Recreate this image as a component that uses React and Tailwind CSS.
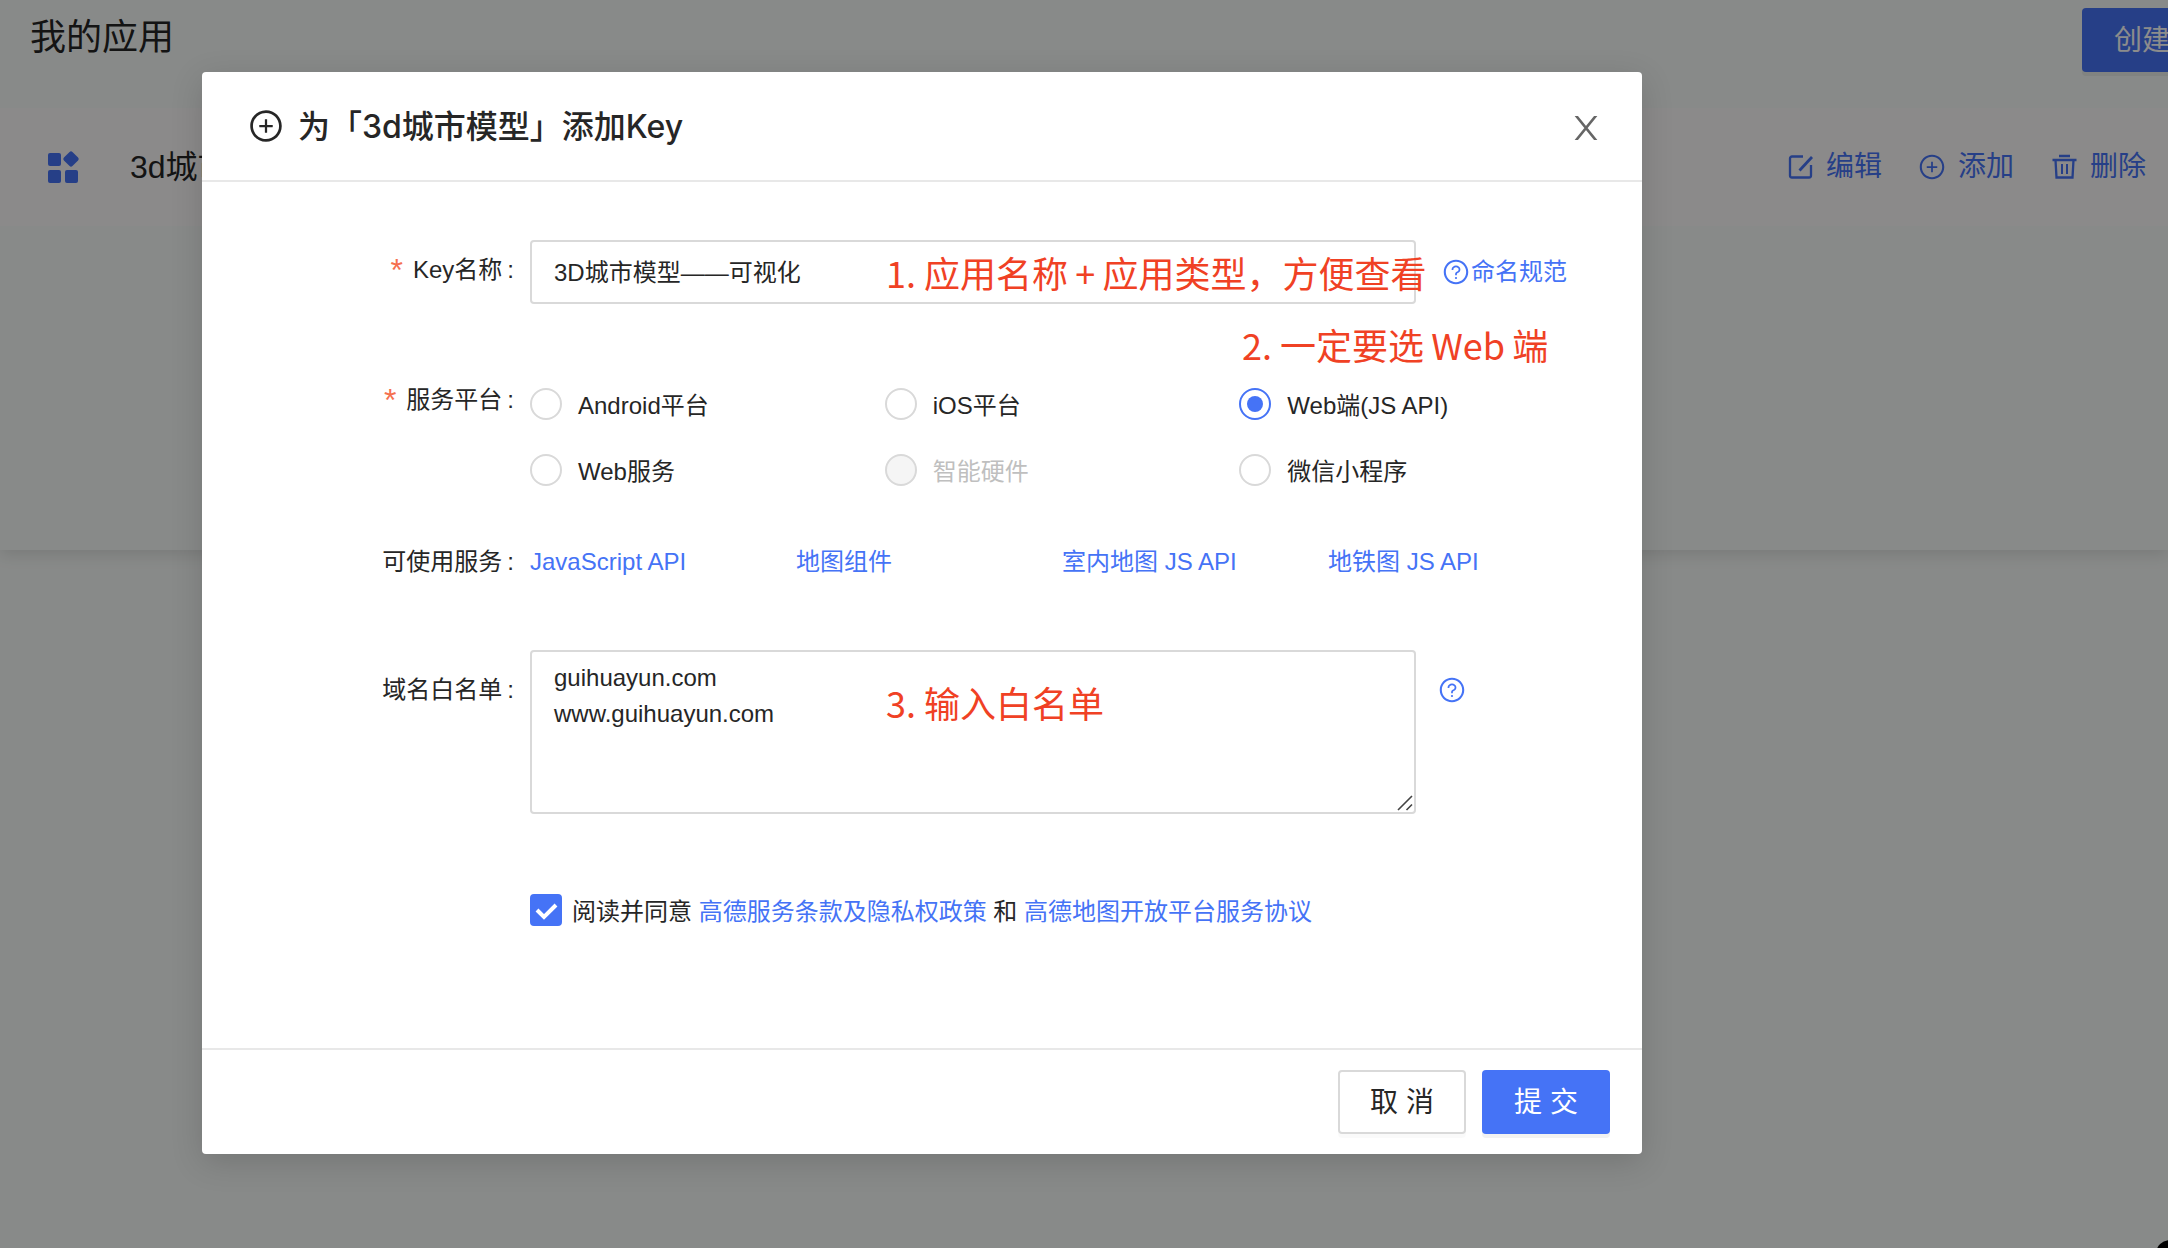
import React, { useState } from "react";
import { AiOutlinePlusCircle, AiOutlineQuestionCircle } from "react-icons/ai";

const platforms = [
  { id: "android", label: "Android平台" },
  { id: "ios", label: "iOS平台" },
  { id: "web-js", label: "Web端(JS API)" },
  { id: "web-service", label: "Web服务" },
  { id: "hardware", label: "智能硬件", disabled: true },
  { id: "wechat", label: "微信小程序" },
];

const services = ["JavaScript API", "地图组件", "室内地图 JS API", "地铁图 JS API"];

const AppsIcon = () => (
  <svg className="size-9 shrink-0" viewBox="0 0 36 36" fill="currentColor">
    <rect x="2" y="4" width="13" height="13" rx="2" />
    <rect x="2" y="21" width="13" height="13" rx="2" />
    <rect x="19" y="21" width="13" height="13" rx="2" />
    <rect x="19" y="4" width="12" height="12" rx="2" transform="rotate(45 25 10)" />
  </svg>
);

const EditIcon = () => (
  <svg className="size-7" viewBox="0 0 28 28" fill="none" stroke="currentColor" strokeWidth="2.3">
    <path d="M17 3.5H6a2 2 0 0 0-2 2v17a2 2 0 0 0 2 2h17a2 2 0 0 0 2-2V12" />
    <path d="M13.5 17.5 26 4" strokeWidth="2.8" />
  </svg>
);

const TrashIcon = () => (
  <svg className="size-7" viewBox="0 0 28 28" fill="none" stroke="currentColor" strokeWidth="2.3">
    <path d="M9 3h11M2.5 7h24M5.5 7l1 17.500h16l1-17.500" />
    <path d="M12 11v10M17 11v10" strokeWidth="2" />
  </svg>
);

const CloseIcon = () => (
  <svg className="size-6" viewBox="0 0 24 24" fill="none" stroke="currentColor" strokeWidth="2.6">
    <path d="M1.500-1 22.500 25M22.500-1 1.500 25" />
  </svg>
);

const RowAction = ({ icon, children }) => (
  <a href="#" className="flex items-center gap-3">
    {icon}
    {children}
  </a>
);

const FormRow = ({ label, htmlFor, required, className = "", labelClass, children }) => (
  <div className={`flex ${className}`}>
    <div className={`flex w-[328px] shrink-0 items-center justify-end pr-4 ${labelClass}`}>
      {required && <span className="mr-[10px] text-[32px] leading-6 text-[#f5704f]">*</span>}
      <label htmlFor={htmlFor}>{label}</label>
      <span className="ml-[5px]">:</span>
    </div>
    <div className="min-w-0 flex-1">{children}</div>
  </div>
);

const Note = ({ className, children }) => (
  <span
    className={`pointer-events-none absolute whitespace-nowrap font-['Noto_Sans_CJK_SC',sans-serif] text-4xl leading-10 text-[#f04124] ${className}`}
  >
    {children}
  </span>
);

const AddKeyModal = () => {
  const [name, setName] = useState("3D城市模型——可视化");
  const [platform, setPlatform] = useState("web-js");
  const [domains, setDomains] = useState("guihuayun.com\nwww.guihuayun.com");
  const [agreed, setAgreed] = useState(true);

  return (
    <div
      role="dialog"
      aria-labelledby="modal-title"
      className="w-full max-w-[1440px] rounded bg-white text-2xl text-[#262626] shadow-[0_8px_32px_rgba(0,0,0,0.15)]"
    >
      <header className="flex h-[110px] items-center border-b-2 border-[#e8e8e8] pl-[46px] pr-11">
        <AiOutlinePlusCircle className="size-9" />
        <h2
          id="modal-title"
          className="ml-[14px] flex-1 pt-0.5 font-['Inter','Noto_Sans_CJK_SC',sans-serif] text-[32px] font-medium"
        >
          为「3d城市模型」添加Key
        </h2>
        <button type="button" aria-label="关闭" className="pt-1 text-[#666]">
          <CloseIcon />
        </button>
      </header>

      <form id="key-form" className="pb-[122px] pr-12 pt-[58px]">
        <FormRow label="Key名称" htmlFor="key-name" required labelClass="h-[60px]">
          <div className="relative flex items-center">
            <input
              id="key-name"
              type="text"
              value={name}
              onChange={(e) => setName(e.target.value)}
              className="h-16 w-[886px] rounded border-2 border-[#d9d9d9] px-[22px] pb-1"
            />
            <Note className="left-[356px] top-3">1. 应用名称&thinsp;+&thinsp;应用类型，方便查看</Note>
            <a href="#" className="ml-[26px] flex items-center gap-px text-[#4573f6]">
              <AiOutlineQuestionCircle className="size-7" />
              命名规范
            </a>
          </div>
        </FormRow>

        <FormRow label="服务平台" required className="mt-[84px]" labelClass="h-6">
          <div className="relative grid grid-cols-3 gap-y-[34px]">
            {platforms.map((item) => (
              <label
                key={item.id}
                className={`flex h-8 items-center ${item.disabled ? "text-[#bfbfbf]" : ""}`}
              >
                <input
                  type="radio"
                  name="platform"
                  value={item.id}
                  checked={platform === item.id}
                  disabled={item.disabled}
                  onChange={() => setPlatform(item.id)}
                  className="mr-4 grid size-8 appearance-none place-items-center rounded-full border-2 border-[#d9d9d9] before:size-4 before:rounded-full before:content-[''] checked:border-[#4573f6] checked:before:bg-[#4573f6] disabled:bg-[#f5f5f5]"
                />
                <span className="pt-1">{item.label}</span>
              </label>
            ))}
            <Note className="-top-16 left-[712px]">2. 一定要选&thinsp;Web&thinsp;端</Note>
          </div>
        </FormRow>

        <FormRow label="可使用服务" className="mt-[58px]" labelClass="h-9">
          <div className="grid h-9 grid-cols-4 items-center text-[#4573f6]">
            {services.map((service) => (
              <a key={service} href="#">
                {service}
              </a>
            ))}
          </div>
        </FormRow>

        <FormRow label="域名白名单" htmlFor="domains" className="mt-[70px]" labelClass="h-20">
          <div className="flex">
            <div className="relative">
              <textarea
                id="domains"
                value={domains}
                onChange={(e) => setDomains(e.target.value)}
                className="block h-[164px] w-[886px] resize-none rounded border-2 border-[#d9d9d9] px-[22px] py-2 leading-9"
              />
              <svg
                className="absolute bottom-[3px] right-[3px] size-4"
                viewBox="0 0 16 16"
                stroke="#444"
                strokeWidth="1.6"
              >
                <path d="M1 15 15 1M9.500 15l5.500-5.500" />
              </svg>
              <Note className="left-[356px] top-8">3. 输入白名单</Note>
            </div>
            <a href="#" aria-label="帮助" className="ml-[22px] mt-[26px] h-7 text-[#4573f6]">
              <AiOutlineQuestionCircle className="size-7" />
            </a>
          </div>
        </FormRow>

        <div className="mt-20 flex h-8 items-center pl-[328px]">
          <input
            id="agree"
            type="checkbox"
            checked={agreed}
            onChange={(e) => setAgreed(e.target.checked)}
            className="peer size-8 appearance-none rounded border-2 border-[#d9d9d9] checked:border-[#4573f6] checked:bg-[#4573f6]"
          />
          <svg
            className="pointer-events-none -ml-8 hidden size-8 peer-checked:block"
            viewBox="0 0 32 32"
            fill="none"
            stroke="#fff"
            strokeWidth="4"
          >
            <path d="m7 16 7 7L26 11" />
          </svg>
          <label htmlFor="agree" className="ml-[10px] whitespace-pre pt-1">
            阅读并同意{" "}
            <a href="#" className="text-[#4573f6]">
              高德服务条款及隐私权政策
            </a>{" "}
            和{" "}
            <a href="#" className="text-[#4573f6]">
              高德地图开放平台服务协议
            </a>
          </label>
        </div>
      </form>

      <footer className="flex justify-end gap-4 border-t-2 border-[#e8e8e8] px-8 py-5 text-[28px]">
        <button
          type="button"
          className="h-16 w-32 rounded border-2 border-[#d9d9d9] pt-0.5 shadow-[0_4px_0_rgba(0,0,0,0.02)]"
        >
          取 消
        </button>
        <button
          type="submit"
          form="key-form"
          className="h-16 w-32 rounded bg-[#4573f6] pt-0.5 text-white shadow-[0_4px_0_rgba(0,0,0,0.05)]"
        >
          提 交
        </button>
      </footer>
    </div>
  );
};

export default function App() {
  return (
    <div className="relative min-h-screen overflow-hidden bg-[#f8fbf9] font-['Liberation_Sans','Noto_Sans_CJK_SC',sans-serif]">
      <section className="h-[550px] shadow-[0_4px_16px_rgba(0,0,0,0.12)]">
        <header className="flex h-[108px] items-start justify-between pl-[30px] pt-2">
          <h1 className="pt-[10px] text-4xl text-[#262626]">我的应用</h1>
          <button
            type="button"
            className="-mr-[34px] h-16 rounded bg-[#4573f6] px-8 pt-0.5 text-[28px] text-white shadow-[0_4px_0_rgba(0,0,0,0.05)]"
          >
            创建
          </button>
        </header>
        <div className="flex h-[118px] items-center bg-[#fdfbfb] pl-[46px] pr-[22px]">
          <span className="text-[#4573f6]">
            <AppsIcon />
          </span>
          <span className="ml-12 flex-1 text-[32px] text-[#262626]">3d城市模型</span>
          <nav className="flex gap-9 text-[28px] text-[#4573f6]">
            <RowAction icon={<EditIcon />}>编辑</RowAction>
            <RowAction icon={<AiOutlinePlusCircle className="size-7" />}>添加</RowAction>
            <RowAction icon={<TrashIcon />}>删除</RowAction>
          </nav>
        </div>
      </section>

      <span className="absolute -bottom-5 -right-4 size-7 rounded-full bg-black" />

      <div className="absolute inset-0 flex items-start bg-black/45 pl-[202px] pr-8 pt-[72px]">
        <AddKeyModal />
      </div>
    </div>
  );
}
